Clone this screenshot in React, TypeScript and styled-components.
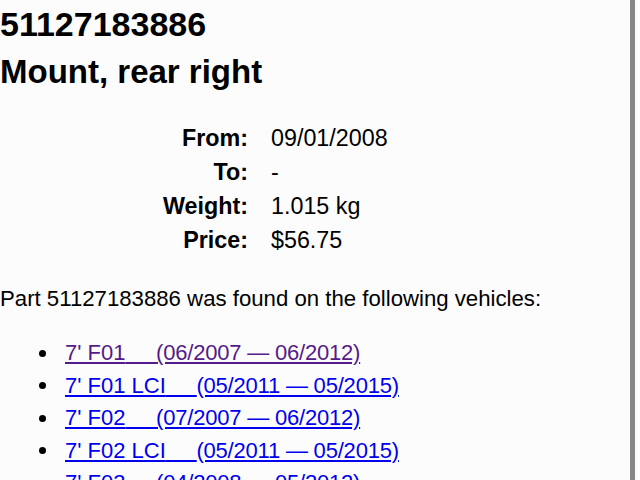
import React from 'react'
import styled, { createGlobalStyle } from 'styled-components'

const GlobalStyle = createGlobalStyle`
    html, body {
        margin: 0;
        padding: 0;
        background: #fcfcfc;
    }
    html {
        overflow: hidden;
    }
    body {
        font-family: "Liberation Sans", Arial, Helvetica, sans-serif;
        color: #000;
    }
`

const Page = styled.div`
    width: 635px;
    min-height: 100vh;
    border-right: 5px solid #878787;
    padding-top: 1px;
    box-sizing: border-box;
`
const Title = styled.h1`
    margin: 0;
    font-size: 34px;
    line-height: 47px;
    font-weight: bold;
`
const SubTitle = styled.h2`
    margin: 0;
    font-size: 33px;
    line-height: 47px;
    font-weight: bold;
`
const InfoTable = styled.dl`
    display: grid;
    grid-template-columns: 248px auto;
    column-gap: 23px;
    margin: 26px 0 0 0;
    font-size: 23.3px;
    line-height: 34px;
`
const InfoLabel = styled.dt`
    font-weight: bold;
    text-align: right;
`
const InfoValue = styled.dd`
    margin: 0;
`
const Lead = styled.p`
    margin: 27px 0 0 0;
    font-size: 22.2px;
    line-height: 30px;
`
const VehicleList = styled.ul`
    list-style: none;
    margin: 23px 0 0 0;
    padding: 0 0 0 39px;
    font-size: 22px;
    line-height: 32.5px;
`
const VehicleItem = styled.li`
    display: flex;
    align-items: center;
`
const Bullet = styled.span`
    width: 7px;
    height: 7px;
    border-radius: 50%;
    background: #000;
    margin-right: 19px;
    flex: none;
`
const VehicleLink = styled.a<{ $visited?: boolean }>`
    color: ${props => props.$visited ? '#551a8b' : '#0000ee'};
    text-decoration: underline;
    text-underline-offset: 2px;
    white-space: pre;
`
const Range = styled.span`
    letter-spacing: -0.2px;
`

const info = [
    { label: 'From:', value: '09/01/2008' },
    { label: 'To:', value: '-' },
    { label: 'Weight:', value: '1.015 kg' },
    { label: 'Price:', value: '$56.75' },
]

const vehicles = [
    { model: "7' F01", range: '(06/2007 \u2014 06/2012)', visited: true },
    { model: "7' F01 LCI", range: '(05/2011 \u2014 05/2015)' },
    { model: "7' F02", range: '(07/2007 \u2014 06/2012)' },
    { model: "7' F02 LCI", range: '(05/2011 \u2014 05/2015)' },
    { model: "7' F03", range: '(04/2008 \u2014 05/2012)' },
    { model: "7' F03 LCI", range: '(05/2012 \u2014 06/2015)' },
    { model: "7' F04", range: '(09/2008 \u2014 06/2015)' },
]

export default function App() {
    return (
        <>
            <GlobalStyle />
            <Page>
                <Title>51127183886</Title>
                <SubTitle>Mount, rear right</SubTitle>

                <InfoTable>
                    {info.map(row => (
                        <React.Fragment key={row.label}>
                            <InfoLabel>{row.label}</InfoLabel>
                            <InfoValue>{row.value}</InfoValue>
                        </React.Fragment>
                    ))}
                </InfoTable>

                <Lead>Part 51127183886 was found on the following vehicles:</Lead>

                <VehicleList>
                    {vehicles.map(v => (
                        <VehicleItem key={v.model}>
                            <Bullet />
                            <VehicleLink href="#" $visited={v.visited}>
                                {v.model}{'\u00a0\u00a0\u00a0\u00a0\u00a0'}<Range>{v.range}</Range>
                            </VehicleLink>
                        </VehicleItem>
                    ))}
                </VehicleList>
            </Page>
        </>
    )
}
